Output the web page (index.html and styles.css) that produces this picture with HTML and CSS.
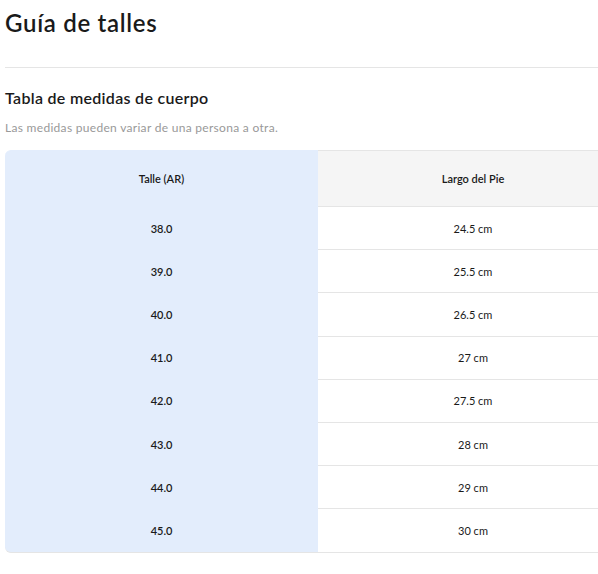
FILE: index.html
```html
<!DOCTYPE html>
<html lang="es">
<head>
<meta charset="utf-8">
<link rel="stylesheet" href="styles.css">
</head>
<body>
<div class="page">
  <h1 class="title">Guía de talles</h1>
  <hr class="divider">
  <h2 class="subtitle">Tabla de medidas de cuerpo</h2>
  <p class="caption">Las medidas pueden variar de una persona a otra.</p>
  <table class="sizes">
    <thead>
      <tr><th class="col-main">Talle (AR)</th><th>Largo del Pie</th></tr>
    </thead>
    <tbody>
      <tr><td class="col-main">38.0</td><td>24.5 cm</td></tr>
      <tr><td class="col-main">39.0</td><td>25.5 cm</td></tr>
      <tr><td class="col-main">40.0</td><td>26.5 cm</td></tr>
      <tr><td class="col-main">41.0</td><td>27 cm</td></tr>
      <tr><td class="col-main">42.0</td><td>27.5 cm</td></tr>
      <tr><td class="col-main">43.0</td><td>28 cm</td></tr>
      <tr><td class="col-main">44.0</td><td>29 cm</td></tr>
      <tr><td class="col-main">45.0</td><td>30 cm</td></tr>
    </tbody>
  </table>
</div>
</body>
</html>
```
FILE: styles.css
```css
html, body {
  margin: 0;
  padding: 0;
  background: #fff;
  overflow: hidden;
}
body {
  font-family: Lato, "Open Sans", sans-serif;
  color: #1a1a1a;
}
.page {
  padding: 8px 0 0 5px;
  width: 593px;
  overflow: hidden;
}
.title {
  margin: 0;
  font-size: 24px;
  line-height: 30px;
  font-weight: 600;
  letter-spacing: 0.7px;
  color: #1a1a1a;
}
.divider {
  border: 0;
  border-top: 1px solid #e5e5e5;
  margin: 29px 0 0 0;
  width: 593px;
}
.subtitle {
  margin: 20px 0 0 0;
  font-size: 16px;
  line-height: 20px;
  font-weight: 600;
  letter-spacing: 0.3px;
  color: #1a1a1a;
}
.caption {
  margin: 12px 0 0 0;
  font-size: 12px;
  line-height: 16px;
  letter-spacing: 0.3px;
  color: #999;
}
.sizes {
  margin-top: 14px;
  border-collapse: separate;
  border-spacing: 0;
  width: 623px;
  table-layout: fixed;
  font-size: 11px;
}
.sizes th, .sizes td {
  text-align: center;
  border-bottom: 1px solid #e5e5e5;
  padding: 0;
  color: #1a1a1a;
}
.sizes th {
  height: 55px;
  font-weight: 600;
  background: #f5f5f5;
  border-top: 1px solid #e5e5e5;
}
.sizes td {
  height: 42.2px;
  font-weight: 400;
  background: #fff;
}
.sizes .col-main {
  width: 313px;
  background: #e3edfc;
  font-weight: 600;
  border-bottom-color: #e3edfc;
}
.sizes thead .col-main {
  border-top-left-radius: 6px;
  border-top-color: #e3edfc;
}
.sizes tbody tr:last-child .col-main {
  border-bottom-left-radius: 6px;
  border-bottom-color: #e5e5e5;
}
.sizes tr:last-child td {
  border-bottom-color: #e5e5e5;
}
```
